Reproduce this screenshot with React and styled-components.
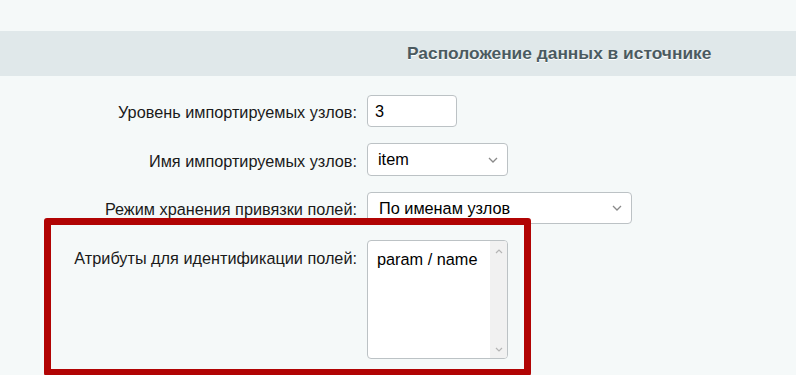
import React from "react";
import styled, { createGlobalStyle } from "styled-components";

const Global = createGlobalStyle`
  html, body { margin: 0; padding: 0; overflow: hidden; }
  body {
    background: #f5f9f9;
    font-family: "Liberation Sans", Arial, sans-serif;
    color: #000;
  }
`;

const Page = styled.div`
  position: relative;
  width: 796px;
  height: 375px;
  padding-top: 31px;
  box-sizing: border-box;
`;

const Heading = styled.div`
  height: 45px;
  background: #e0e8ea;
  padding-left: 407px;
  font-size: 17.35px;
  font-weight: bold;
  line-height: 44px;
  color: #4b5a60;
  text-shadow: 0 1px #fff;
  white-space: nowrap;
`;

const Form = styled.div`
  display: grid;
  grid-template-columns: 357px auto;
  column-gap: 10px;
  row-gap: 16px;
  margin-top: 19px;
  justify-content: start;
`;

const Label = styled.div`
  font-size: 16.25px;
  text-align: right;
  white-space: nowrap;
  color: #1a1a1a;
  align-self: ${(p) => (p.$top ? "start" : "center")};
  padding-top: ${(p) => (p.$top ? "9px" : "3px")};
`;

const Control = styled.div`
  display: flex;
`;

const TextInput = styled.input`
  box-sizing: border-box;
  width: 90px;
  height: 32px;
  border: 1px solid #bcc2c5;
  border-radius: 4px;
  background: #fff;
  padding: 0 7px;
  font-family: inherit;
  font-size: 16.3px;
  color: #000;
  outline: none;
`;

const SelectBox = styled.div`
  position: relative;
  box-sizing: border-box;
  width: ${(p) => p.$w}px;
  height: ${(p) => p.$h}px;
  border: 1px solid #bcc2c5;
  border-radius: 4px;
  background: #fff;
  display: flex;
  align-items: center;
  padding-left: ${(p) => p.$pl}px;
  font-size: 16.3px;
  color: #000;
`;

const Chevron = styled.svg`
  position: absolute;
  right: 9px;
  top: 50%;
  margin-top: -3px;
`;

const AreaBox = styled.div`
  box-sizing: border-box;
  width: 141px;
  height: 119px;
  border: 1px solid #bcc2c5;
  border-radius: 4px;
  background: #fff;
  display: flex;
  overflow: hidden;
`;

const AreaText = styled.div`
  flex: 1;
  padding: 9px 9px;
  font-size: 16.3px;
  color: #000;
  white-space: nowrap;
`;

const ScrollTrack = styled.div`
  width: 17px;
  background: #f1f1f1;
  display: flex;
  flex-direction: column;
  justify-content: space-between;
  align-items: center;
  padding: 8px 0 6px;
`;

const RedFrame = styled.div`
  position: absolute;
  left: 44px;
  top: 218px;
  width: 487px;
  height: 158px;
  box-sizing: border-box;
  border: 7px solid #b10404;
  border-radius: 3px;
  pointer-events: none;
`;

const Up = ({ color = "#b5b5b5" }) => (
  <svg width="8" height="5" viewBox="0 0 8 5">
    <path d="M1 4 L4 1 L7 4" fill="none" stroke={color} strokeWidth="1.2" />
  </svg>
);

const DownSmall = ({ color = "#b5b5b5" }) => (
  <svg width="8" height="5" viewBox="0 0 8 5">
    <path d="M1 1 L4 4 L7 1" fill="none" stroke={color} strokeWidth="1.2" />
  </svg>
);

const SelectChevron = () => (
  <Chevron width="10" height="6" viewBox="0 0 10 6">
    <path d="M1 1 L5 5 L9 1" fill="none" stroke="#8a8a8a" strokeWidth="1.3" />
  </Chevron>
);

export default function App() {
  return (
    <>
      <Global />
      <Page>
        <Heading>Расположение данных в источнике</Heading>
        <Form>
          <Label>Уровень импортируемых узлов:</Label>
          <Control>
            <TextInput defaultValue="3" />
          </Control>

          <Label>Имя импортируемых узлов:</Label>
          <Control>
            <SelectBox $w={141} $h={33} $pl={10}>
              item
              <SelectChevron />
            </SelectBox>
          </Control>

          <Label>Режим хранения привязки полей:</Label>
          <Control>
            <SelectBox $w={265} $h={32} $pl={11}>
              По именам узлов
              <SelectChevron />
            </SelectBox>
          </Control>

          <Label $top>Атрибуты для идентификации полей:</Label>
          <Control>
            <AreaBox>
              <AreaText>param / name</AreaText>
              <ScrollTrack>
                <Up />
                <DownSmall />
              </ScrollTrack>
            </AreaBox>
          </Control>
        </Form>
        <RedFrame />
      </Page>
    </>
  );
}
